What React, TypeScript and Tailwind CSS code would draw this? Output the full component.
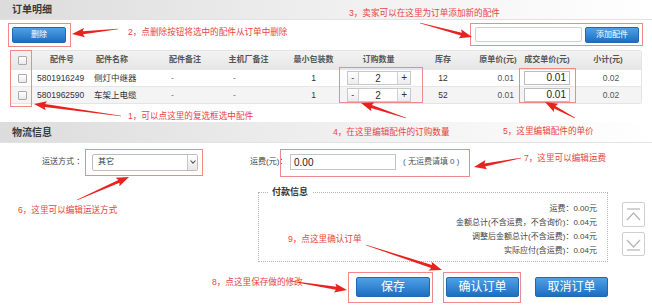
import React from "react";

type Pt = [number, number];

function arrowPoints(tail: Pt, tip: Pt): string {
  const [x1, y1] = tail;
  const [x2, y2] = tip;
  const dx = x2 - x1;
  const dy = y2 - y1;
  const L = Math.hypot(dx, dy);
  const ux = dx / L;
  const uy = dy / L;
  const px = -uy;
  const py = ux;
  const hl = 11;
  const hw = 4.6;
  const s0 = 0.35;
  const s1 = 1.5;
  const bx = x2 - ux * hl;
  const by = y2 - uy * hl;
  const pts: Pt[] = [
    [x1 + px * s0, y1 + py * s0],
    [bx + px * s1, by + py * s1],
    [bx + px * hw - ux * 1.5, by + py * hw - uy * 1.5],
    [x2, y2],
    [bx - px * hw - ux * 1.5, by - py * hw - uy * 1.5],
    [bx - px * s1, by - py * s1],
    [x1 - px * s0, y1 - py * s0],
  ];
  return pts.map((p) => `${p[0].toFixed(1)},${p[1].toFixed(1)}`).join(" ");
}

const arrows: [Pt, Pt][] = [
  [[121, 116], [34, 104]],
  [[118, 29], [72, 34]],
  [[420, 23], [472, 37]],
  [[406, 118], [361, 103]],
  [[575, 118], [545, 102]],
  [[77, 200], [129, 177]],
  [[521, 158], [474, 167]],
  [[290, 281], [347, 290]],
  [[366, 245], [442, 270]],
];

const notes: { x: number; y: number; t: string }[] = [
  { x: 128, y: 110, t: "1，可以点这里的复选框选中配件" },
  { x: 128, y: 26, t: "2，点删除按钮将选中的配件从订单中删除" },
  { x: 349, y: 7, t: "3，卖家可以在这里为订单添加新的配件" },
  { x: 333, y: 126, t: "4，在这里编辑配件的订购数量" },
  { x: 503, y: 125, t: "5，这里编辑配件的单价" },
  { x: 18, y: 204, t: "6，这里可以编辑运送方式" },
  { x: 524, y: 152, t: "7，这里可以编辑运费" },
  { x: 212, y: 276, t: "8，点这里保存做的修改" },
  { x: 288, y: 233, t: "9，点这里确认订单" },
];

const boxes: { l: number; t: number; w: number; h: number }[] = [
  { l: 8, t: 23, w: 63, h: 24 },
  { l: 470, t: 23, w: 173, h: 23 },
  { l: 10, t: 50, w: 22, h: 57 },
  { l: 339, t: 67, w: 84, h: 36 },
  { l: 519, t: 68, w: 57, h: 35 },
  { l: 85, t: 149, w: 118, h: 27 },
  { l: 280, t: 149, w: 190, h: 28 },
  { l: 348, t: 272, w: 85, h: 31 },
  { l: 443, t: 272, w: 78, h: 31 },
];

const cols =
  "grid grid-cols-[22px_58px_55px_70px_65px_65px_65px_64px_46px_52px_70px]";

function CheckBox() {
  return (
    <span className="block w-[9px] h-[9px] border border-[#a9a9a9] rounded-[1px] bg-linear-to-b from-white to-[#e9e9e9]" />
  );
}

function Qty() {
  return (
    <div className="flex h-[14px] ml-[1px] border border-[#c9c9c9] bg-white">
      <span className="w-[11px] flex items-center justify-center border-r border-[#d0d0d0] bg-linear-to-b from-white to-[#ececec] text-[9px] leading-none text-[#333]">
        -
      </span>
      <span className="w-[40px] flex items-center justify-center text-[10px] text-[#333]">
        2
      </span>
      <span className="w-[13px] flex items-center justify-center border-l border-[#d0d0d0] bg-linear-to-b from-white to-[#ececec] text-[10px] leading-none text-[#333]">
        +
      </span>
    </div>
  );
}

function Row({
  no,
  name,
  stock,
  bg,
}: {
  no: string;
  name: string;
  stock: string;
  bg: string;
}) {
  return (
    <div className={`${cols} h-[17px] items-center border-t border-[#e6e6e6] text-[8.5px] text-[#333] ${bg}`}>
      <div className="flex justify-center">
        <CheckBox />
      </div>
      <div className="pl-[4px]">{no}</div>
      <div className="pl-[3px]">{name}</div>
      <div className="pl-[25px] text-[#777]">-</div>
      <div className="pl-[17px] text-[#777]">-</div>
      <div className="text-center">1</div>
      <div>
        <Qty />
      </div>
      <div className="text-center">{stock}</div>
      <div className="text-right pr-[7px] text-[#555]">0.01</div>
      <div className="pl-[3px]">
        <div className="w-[46px] h-[14px] border border-[#bdbdbd] bg-white text-right pr-[3px] text-[10px] leading-[12px] text-[#222]">
          0.01
        </div>
      </div>
      <div className="text-center pl-[6px] text-[#555]">0.02</div>
    </div>
  );
}

function BlueButton({ children, w }: { children: React.ReactNode; w: string }) {
  return (
    <button
      className={`${w} h-[20px] flex items-center justify-center rounded-[2px] border border-[#2068b4] bg-linear-to-b from-[#4da1e6] to-[#1d6ec2] text-white text-[12px] leading-none`}
    >
      {children}
    </button>
  );
}

export default function App() {
  return (
    <div className="relative w-[652px] h-[307px] overflow-hidden bg-white font-['Liberation_Sans','Noto_Sans_CJK_SC',sans-serif] text-[#333]">
      {/* Section 1 header */}
      <div className="h-[20px] flex items-center pl-[12px] bg-linear-to-r from-[#dcdcdc] via-[#efefef] to-white border-b border-[#e2e2e2] text-[10px] font-bold text-[#3a3a3a]">
        订单明细
      </div>

      {/* toolbar */}
      <div className="mt-[3px] h-[23px] flex items-center justify-between pl-[12px] pr-[13px]">
        <button className="w-[54px] h-[16px] flex items-center justify-center rounded-[2px] border border-[#2068b4] bg-linear-to-b from-[#4da1e6] to-[#1d6ec2] text-white text-[8px] leading-none">
          删除
        </button>
        <div className="flex items-center gap-[3px]">
          <div className="w-[107px] h-[15px] border border-[#cfcfcf] rounded-[2px] bg-white" />
          <button className="w-[54px] h-[16px] flex items-center justify-center rounded-[2px] border border-[#2068b4] bg-linear-to-b from-[#4da1e6] to-[#1d6ec2] text-white text-[8px] leading-none">
            添加配件
          </button>
        </div>
      </div>

      {/* table */}
      <div className="mt-[4px] mx-[10px] border border-[#e4e4e4] rounded-[2px]">
        <div className={`${cols} h-[18px] items-center bg-linear-to-b from-[#f3f3f3] to-[#e6e6e6] text-[8px] font-bold text-[#555]`}>
          <div className="flex justify-center">
            <CheckBox />
          </div>
          <div className="text-center">配件号</div>
          <div className="pl-[5px]">配件名称</div>
          <div className="text-center pl-[8px]">配件备注</div>
          <div className="text-center">主机厂备注</div>
          <div className="text-center">最小包装数</div>
          <div className="text-center">订购数量</div>
          <div className="text-center">库存</div>
          <div className="text-center">原单价(元)</div>
          <div className="text-center">成交单价(元)</div>
          <div className="text-center">小计(元)</div>
        </div>
        <Row no="5801916249" name="侧灯中继器" stock="12" bg="bg-white" />
        <Row no="5801962590" name="车架上电缆" stock="52" bg="bg-[#f4f4f4]" />
      </div>

      {/* Section 2 header */}
      <div className="mt-[18px] h-[21px] flex items-center pl-[12px] bg-linear-to-r from-[#dcdcdc] via-[#efefef] to-white border-b border-[#e2e2e2] text-[10px] font-bold text-[#3a3a3a]">
        物流信息
      </div>

      {/* shipping row */}
      <div className="mt-[5px] h-[28px] flex items-center text-[8px] text-[#444]">
        <span className="ml-[42px] w-[50px]">运送方式 ：</span>
        <div className="w-[106px] h-[17px] flex items-center justify-between border border-[#bdbdbd] rounded-[2px] bg-white">
          <span className="pl-[5px] text-[8px] text-[#333]">其它</span>
          <span className="w-[10px] h-[15px] flex items-center justify-center border-l border-[#c8c8c8] bg-linear-to-b from-white to-[#e6e6e6]">
            <svg width="6" height="4" viewBox="0 0 6 4">
              <path d="M0.5 0.5 L3 3.2 L5.5 0.5" fill="none" stroke="#555" strokeWidth="1.1" />
            </svg>
          </span>
        </div>
        <span className="ml-[52px] w-[40px]">运费(元)：</span>
        <div className="w-[106px] h-[16px] flex items-center border border-[#c4c4c4] bg-white pl-[3px] text-[10px] text-[#222]">
          0.00
        </div>
        <span className="ml-[7px] text-[8px] text-[#555]">( 无运费请填 0 )</span>
      </div>

      {/* payment + buttons */}
      <div className="ml-[258px] w-[350px] mt-[10px] flex flex-col">
        <fieldset className="border border-dotted border-[#b5b5b5] pt-[4px] pb-[3px] pr-[10px]">
          <legend className="ml-[9px] px-[4px] text-[9px] leading-[12px] font-bold text-[#333]">
            付款信息
          </legend>
          <div className="flex flex-col items-end text-[8px] leading-[14px] text-[#444]">
            <div>运费：0.00元</div>
            <div>金额总计(不含运费，不含询价)：0.04元</div>
            <div>调整后金额总计(不含运费)：0.04元</div>
            <div>实际应付(含运费)：0.04元</div>
          </div>
        </fieldset>
        <div className="mt-[15px] flex justify-end gap-[16px]">
          <BlueButton w="w-[74px]">保存</BlueButton>
          <BlueButton w="w-[73px]">确认订单</BlueButton>
          <BlueButton w="w-[73px]">取消订单</BlueButton>
        </div>
      </div>

      {/* floating scroll buttons */}
      <div className="absolute left-[622px] top-[202px] flex flex-col gap-[5px]">
        <div className="w-[23px] h-[25px] border border-[#cfcfcf] rounded-[2px] bg-white">
          <svg width="21" height="23" viewBox="0 0 21 23">
            <path d="M4 6 H17" stroke="#b5b5b5" strokeWidth="1.2" />
            <path d="M4 17 L10.5 10 L17 17" fill="none" stroke="#b5b5b5" strokeWidth="1.2" />
          </svg>
        </div>
        <div className="w-[23px] h-[24px] border border-[#cfcfcf] rounded-[2px] bg-white">
          <svg width="21" height="22" viewBox="0 0 21 22">
            <path d="M4 7 L10.5 14 L17 7" fill="none" stroke="#b5b5b5" strokeWidth="1.2" />
            <path d="M4 17 H17" stroke="#b5b5b5" strokeWidth="1.2" />
          </svg>
        </div>
      </div>

      {/* annotation highlight boxes */}
      {boxes.map((b, i) => (
        <div
          key={i}
          className="absolute border border-[#f08a8a] pointer-events-none"
          style={{ left: b.l, top: b.t, width: b.w, height: b.h }}
        />
      ))}

      {/* annotation texts */}
      {notes.map((n, i) => (
        <div
          key={i}
          className="absolute whitespace-nowrap text-[8.6px] leading-[12px] text-[#e84444]"
          style={{ left: n.x, top: n.y }}
        >
          {n.t}
        </div>
      ))}

      {/* arrows */}
      <svg className="absolute left-0 top-0 pointer-events-none" width="652" height="307" viewBox="0 0 652 307">
        {arrows.map((a, i) => (
          <polygon key={i} points={arrowPoints(a[0], a[1])} fill="#e8231f" />
        ))}
      </svg>
    </div>
  );
}
